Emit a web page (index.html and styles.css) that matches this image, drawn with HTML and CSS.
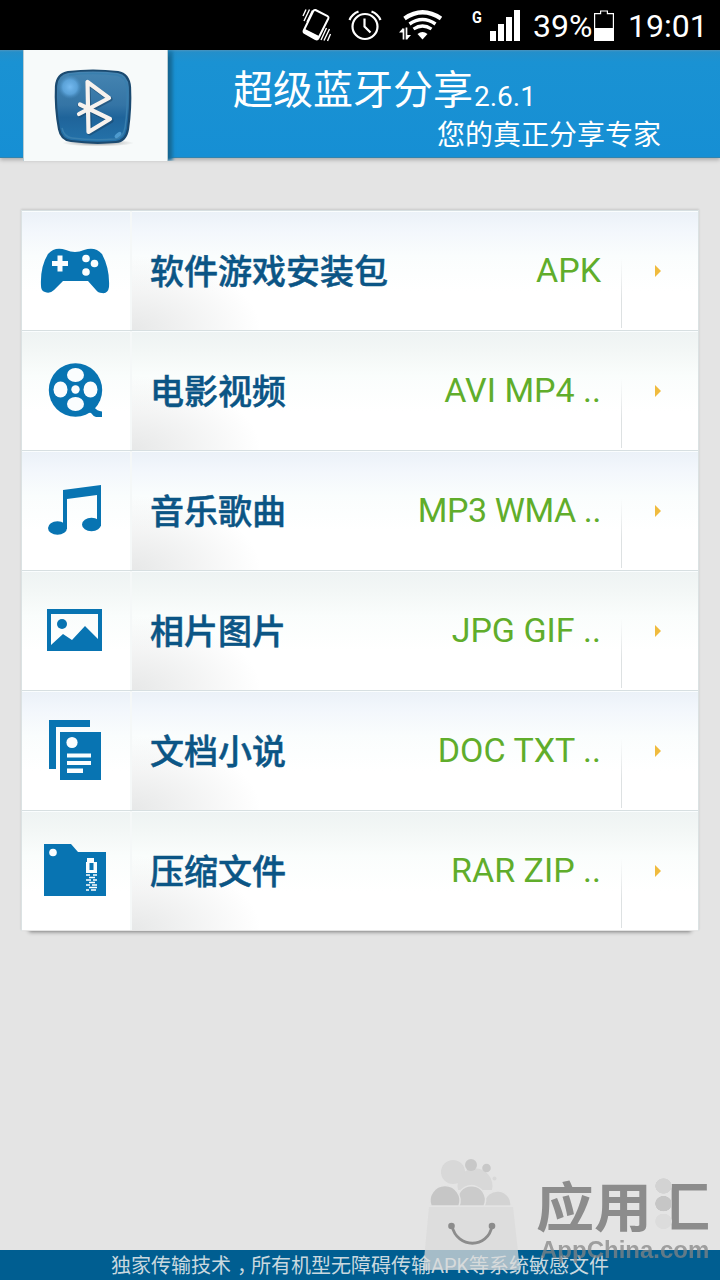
FILE: index.html
```html
<!DOCTYPE html>
<html lang="zh-CN">
<head>
    <meta charset="UTF-8">
    <meta name="viewport" content="width=device-width, initial-scale=1.0">
    <title>超级蓝牙分享</title>
    <link rel="stylesheet" href="styles.css">
</head>
<body>
    <div id="container">
        <div class="status">
            <svg class="vibrate" width="32" height="36" viewBox="0 0 32 36" fill="none" stroke="#fff">
                <path d="M14.500 3 L26.500 9 Q28 10 27.300 11.500 L17.500 31 Q16.500 33 14.500 32 L3.500 26 Q2 25 3 23 L12 4.500 Q13 2.500 14.500 3 Z" stroke-width="2" />
                <path d="M2 25 L4 22 L18 29 L16.500 33 Z" fill="#fff" stroke="none" />
                <path d="M2 9 L5 2.500 M3 14 L8.500 2.500 M6 15 L11.500 3.500 M20 33 L25.500 21 M23 33.500 L28.500 22 M26.500 34 L29.500 27" stroke-width="1.400" />
            </svg>
            <svg class="alarm" width="34" height="34" viewBox="0 0 34 34" fill="none" stroke="#fff" stroke-width="2.200">
                <circle cx="17" cy="18.500" r="12.500" />
                <path d="M16.500 10.500 V18.500 L22.500 24.500" />
                <path d="M1.500 12 Q4 6 10.500 3.500 M32.500 12 Q30 6 23.500 3.500" />
            </svg>
            <svg class="wifi" width="44" height="32" viewBox="0 0 44 32" fill="none" stroke="#fff">
                <path d="M5.500 9.500 Q23.500 -3 42 9.500" stroke-width="4.200" />
                <path d="M10.500 15 Q23.500 6 36.500 15" stroke-width="3.400" />
                <path d="M14.500 20 Q23.500 14 32.500 20" stroke-width="3.200" />
                <path d="M18.500 25 Q23.500 21 28.500 25 L23.500 30.500 Z" fill="#fff" stroke="none" />
                <path d="M4.500 30.500 V19.500 M7.500 18.500 V30.500" stroke-width="1.700" />
                <path d="M0 23.500 L4 19 V23.500 Z M8 26 H12 L8 30.500 Z" fill="#fff" stroke="none" />
            </svg>
            <span class="net">G</span>
            <svg class="signal" width="30" height="31" viewBox="0 0 30 31" fill="#fff">
                <path d="M0 21 h6 v10 h-6 z M8 14 h6 v17 h-6 z M16 7 h6 v24 h-6 z M24 0 h6 v31 h-6 z" />
            </svg>
            <span class="percent">39%</span>
            <svg class="battery" width="20" height="31" viewBox="0 0 20 31">
                <path d="M.6 3.600 H6.600 V1 H13.400 V3.600 H19.400 V30 H.6 Z" fill="none" stroke="#fff" stroke-width="1.200" />
                <rect y="18" width="20" height="13" fill="#fff" />
            </svg>
            <span class="clock">19:01</span>
        </div>

        <div class="header">
            <div class="logo">
                <svg width="84" height="80" viewBox="0 0 84 80">
                    <defs>
                        <linearGradient id="glass" x1="0" y1="0" x2="0" y2="1">
                            <stop offset="0" stop-color="#4685b2" />
                            <stop offset=".48" stop-color="#3474a5" />
                            <stop offset=".65" stop-color="#1f649a" />
                            <stop offset="1" stop-color="#2472aa" />
                        </linearGradient>
                        <radialGradient id="shine">
                            <stop offset="0" stop-color="#75baf0" />
                            <stop offset=".6" stop-color="#62abe3" stop-opacity=".8" />
                            <stop offset="1" stop-color="#4a8fc4" stop-opacity="0" />
                        </radialGradient>
                        <radialGradient id="under">
                            <stop offset="0" stop-color="#777" stop-opacity=".75" />
                            <stop offset="1" stop-color="#777" stop-opacity="0" />
                        </radialGradient>
                    </defs>
                    <ellipse cx="46" cy="76" rx="36" ry="3.500" fill="url(#under)" />
                    <path d="M16 5 Q41 2 66 5 Q77 7 78 20 Q79 41 76 62 Q74 74 64 75 Q41 77 19 74 Q9 73 7 62 Q3 41 4 19 Q5 7 16 5 Z" fill="url(#glass)" stroke="#1b4a70" stroke-width="2.200" />
                    <path d="M17 8 Q41 5 65 8 Q74 10 75 20 Q76 41 73 61 Q71 71 63 72 Q41 74 20 71 Q12 70 10 61" fill="none" stroke="#397fae" stroke-width="1.500" />
                    <ellipse cx="18" cy="20" rx="12" ry="12" fill="url(#shine)" />
                    <ellipse cx="66" cy="68" rx="4" ry="2" fill="#61aee0" opacity=".7" transform="rotate(-40 66 68)" />
                    <path d="M28 48 L58 32 L36 16 L37.500 66 L59 53.500 L28 38" fill="none" stroke="#173f61" stroke-width="5" stroke-linejoin="round" stroke-linecap="round" opacity=".5" />
                    <path d="M27 47 L57 31 L35.500 15 L36.500 65 L58 52 L28 37.500" fill="none" stroke="#f7f2ee" stroke-width="4.200" stroke-linejoin="round" stroke-linecap="round" />
                </svg>
            </div>
            <div class="title">
                <h1>超级蓝牙分享<small>2.6.1</small></h1>
                <p>您的真正分享专家</p>
            </div>
        </div>

        <div class="list">
            <div class="item">
                <div class="icon">
                    <svg width="70" height="48" viewBox="0 0 70 48">
                        <path d="M8 7 Q15 -1 26 3 Q35 7 44 3 Q55 -1 62 7 Q70 22 69 40 Q68 47 62 46 Q58 46 56 43 L48 34 H23 L14 43 Q10 47 5 45 Q1 44 1 39 Q0 20 8 7 Z" />
                        <path class="hole" d="M17.500 8.500 h5 v5.500 h5.500 v5 h-5.500 v5.500 h-5 v-5.500 h-5.500 v-5 h5.500 z" />
                        <circle class="hole" cx="46" cy="11.500" r="3.800" />
                        <circle class="hole" cx="54.500" cy="16.500" r="3.800" />
                        <circle class="hole" cx="46" cy="25" r="3.800" />
                    </svg>
                </div>
                <div class="name">软件游戏安装包</div>
                <div class="type">APK</div>
                <div class="more"></div>
            </div>
            <div class="item">
                <div class="icon">
                    <svg width="56" height="56" viewBox="0 0 56 56">
                        <circle cx="28.500" cy="27" r="26.700" />
                        <path d="M40 49 L47 44 Q50 48 55 48.500 V54 H49 Q46 53 44 50 Z" />
                        <ellipse class="hole" cx="28.500" cy="12" rx="8.500" ry="7" />
                        <ellipse class="hole" cx="28.500" cy="41" rx="8.500" ry="7" />
                        <ellipse class="hole" cx="13.500" cy="26.500" rx="7" ry="8" />
                        <ellipse class="hole" cx="43.500" cy="26.500" rx="7" ry="8" />
                        <circle class="hole" cx="28.500" cy="26.500" r="4.200" />
                    </svg>
                </div>
                <div class="name">电影视频</div>
                <div class="type">AVI MP4 ..</div>
                <div class="more"></div>
            </div>
            <div class="item">
                <div class="icon">
                    <svg width="54" height="52" viewBox="0 0 54 52">
                        <path d="M15 5 L53 0 V41 H49 V10 L19 14 V44 H15 Z" />
                        <ellipse cx="9.500" cy="43" rx="9.500" ry="6.800" />
                        <ellipse cx="43.500" cy="39.500" rx="9.500" ry="6.800" />
                    </svg>
                </div>
                <div class="name">音乐歌曲</div>
                <div class="type narrow">MP3 WMA ..</div>
                <div class="more"></div>
            </div>
            <div class="item">
                <div class="icon">
                    <svg width="56" height="44" viewBox="0 0 56 44">
                        <path d="M0 0 H55 V42 H0 Z M4 5 V36 L16 25 L25 31 L38 17 L51 30 V5 Z" fill-rule="evenodd" />
                        <circle cx="15" cy="15" r="5" />
                    </svg>
                </div>
                <div class="name">相片图片</div>
                <div class="type">JPG GIF ..</div>
                <div class="more"></div>
            </div>
            <div class="item">
                <div class="icon">
                    <svg width="54" height="62" viewBox="0 0 54 62">
                        <path d="M1 0 H42 V7 H8 V49 H1 Z" />
                        <rect x="12" y="12" width="41" height="48" />
                        <circle class="hole" cx="24" cy="22.500" r="5.600" />
                        <path class="hole" d="M19 33.500 h24 v4 h-24 z M19 41 h24 v4 h-24 z M19 48.500 h16 v4.500 h-16 z" />
                    </svg>
                </div>
                <div class="name">文档小说</div>
                <div class="type">DOC TXT ..</div>
                <div class="more"></div>
            </div>
            <div class="item">
                <div class="icon">
                    <svg width="62" height="54" viewBox="0 0 62 54">
                        <path d="M0 0 H27 L34 8 H62 V52 H0 Z" />
                        <circle class="hole" cx="9" cy="8.500" r="3.800" />
                        <path class="hole" d="M43 14 h7 v4 h3 v11 h-11 v-11 h1 z" />
                        <rect x="45.500" y="19" width="4" height="7" />
                        <path d="M42 31 h4 M49 31 h4 M45 33.500 h6 M42 36 h5 M49 36 h4 M45 38.500 h6 M42 41 h4 M48 41 h5 M45 43.500 h8 M42 46 h3 M47 46 h5" fill="none" stroke="#fff" stroke-width="1.600" />
                    </svg>
                </div>
                <div class="name">压缩文件</div>
                <div class="type">RAR ZIP ..</div>
                <div class="more"></div>
            </div>
        </div>

        <div class="footer">独家传输技术<span class="comma">，</span>所有机型无障碍传输APK等系统敏感文件</div>

        <div class="mark">
            <svg width="100" height="120" viewBox="0 0 100 120">
                <g fill="#d7d7d7">
                    <circle cx="31" cy="22" r="12" />
                    <path d="M36 40 a17.500 17.500 0 1 1 34 0 z" />
                    <circle cx="72.500" cy="28.500" r="2" />
                </g>
                <circle cx="49" cy="15" r="6" fill="#c6c6c6" />
                <circle cx="64.500" cy="18" r="4.300" fill="#c6c6c6" />
                <g stroke="#e4e4e4" stroke-width="1.500">
                    <path d="M62 56 v-3 a13 13 0 0 1 27 3 z" fill="#d2d2d2" />
                    <path d="M36 56 v-10 a14 14 0 1 1 26 10 z" fill="#c9c9c9" />
                    <path d="M9 56 a15 15 0 1 1 28 0 z" fill="#c4c4c4" />
                </g>
                <path d="M7 57 H91 L98 120 H1 Z" fill="#dadada" opacity=".82" />
                <path d="M30 76 C35 99 66 99 70 76" fill="none" stroke="#858585" stroke-width="2.800" />
                <circle cx="29.500" cy="76" r="3.300" fill="#858585" />
                <circle cx="70" cy="76" r="3.300" fill="#858585" />
            </svg>
            <div class="brand">
                <div class="brand-name">应用<span class="hui">汇</span></div>
                <div class="brand-site">AppChina.com</div>
            </div>
        </div>
    </div>
</body>
</html>
```
FILE: styles.css
```css
* {
    margin: 0;
    padding: 0;
    box-sizing: border-box;
}
body {
    font-family: Roboto, "Noto Sans CJK SC", sans-serif;
    background-color: #e4e4e4;
}
svg {
    display: block;
    flex-shrink: 0;
}
#container {
    width: 720px;
    height: 1280px;
    position: relative;
    display: flex;
    flex-direction: column;
    overflow: hidden;
}
.status {
    height: 50px;
    padding-left: 301px;
    display: flex;
    align-items: center;
    background-color: #000;
    color: #fff;
    font-size: 32px;
    line-height: 50px;
    white-space: nowrap;
}
.alarm {
    margin-left: 15px;
}
.wifi {
    margin-left: 17px;
}
.net {
    width: 18px;
    margin-left: 29px;
    font-size: 17px;
    font-weight: bold;
    line-height: 17px;
    transform: translateY(-8px) scaleX(.85);
    transform-origin: left;
}
.percent {
    width: 61px;
    margin: 1px 0 0 13px;
}
.signal, .battery {
    margin-top: 1px;
}
.clock {
    margin: 1px 0 0 14px;
}
.header {
    height: 108px;
    display: flex;
    background: linear-gradient(#4a93bd 0, #248fca 2px, #1a92d3 12px, #168fd4 100%);
    border-bottom: 1px solid #3284ae;
    box-shadow: 0 2px 4px rgba(0, 0, 0, .25);
    color: #fff;
}
.logo {
    width: 145px;
    height: 111px;
    margin-left: 23px;
    padding: 17px 0 0 28px;
    background-color: #f7fafa;
    border: solid #b8ccd3;
    border-width: 0 1px;
    box-shadow: 6px 2px 3px -4px #14648f, 6px 0 3px -1px #1975a7;
    clip-path: inset(0 -10px 0 -2px);
    flex-shrink: 0;
}
.title {
    width: 428px;
    margin-left: 65px;
}
.title h1 {
    height: 65px;
    font-size: 40px;
    font-weight: normal;
    line-height: 82px;
}
.title small {
    margin-left: 1px;
    font-size: 28px;
    position: relative;
    top: 2px;
}
.title p {
    font-size: 28px;
    line-height: 41px;
    text-align: right;
}
.list {
    width: 678px;
    height: 721px;
    margin: 52px 0 0 21px;
    border: solid #dbe2e3;
    border-width: 0 1px;
    box-shadow: 0 -1px 2px rgba(0, 0, 0, .12), 0 9px 4px -8px rgba(0, 0, 0, .45);
}
.item {
    height: 120px;
    display: flex;
    align-items: center;
    background: linear-gradient(#ebf1f8 0, #f3f7fc 20px, #fafdfd 45px, #fff 80px);
    border-top: 1px solid #d7dfe1;
    box-shadow: inset 0 1px #fafdfe;
}
.item:nth-child(even) {
    background: linear-gradient(#eef3f3 0, #f3f7f6 20px, #fafdfc 45px, #fff 80px);
}
.icon {
    width: 110px;
    height: 119px;
    padding-right: 2px;
    display: flex;
    align-items: center;
    justify-content: center;
    border-right: 2px solid #f5f8f8;
}
.icon svg {
    fill: #0874b2;
}
.icon .hole {
    fill: #fafdfe;
}
.name {
    height: 119px;
    flex: 1;
    padding-left: 18px;
    background: radial-gradient(ellipse at 0 100%, rgba(145, 150, 150, .22), rgba(170, 175, 175, .1) 45%, transparent 70%) no-repeat left bottom / 130px 75px;
    color: #0b5585;
    font-size: 34px;
    font-weight: 500;
    line-height: 122px;
    white-space: nowrap;
    -webkit-text-stroke: .5px #0b5585;
}
.type {
    padding-right: 20px;
    color: #60ad2b;
    font-size: 34px;
    line-height: 121px;
}
.narrow {
    letter-spacing: -.4px;
}
.more {
    width: 77px;
    height: 119px;
    padding-left: 34px;
    display: flex;
    align-items: center;
    background: linear-gradient(transparent 40%, #dde1e2 75%) no-repeat left top / 1px 117px;
}
.more::after {
    content: "";
    border: solid transparent;
    border-width: 6px 0 6px 6px;
    border-left-color: #f0bb3e;
}
.footer {
    height: 30px;
    margin-top: auto;
    background-color: #005e91;
    color: #c9d8df;
    font-size: 20px;
    line-height: 33px;
    text-align: center;
}
.comma {
    display: inline-block;
    width: 20px;
    text-indent: 6px;
}
/* 水印浮在页脚上 */
.mark {
    position: absolute;
    left: 422px;
    top: 1150px;
    display: flex;
    opacity: .92;
}
.brand {
    margin: 16px 0 0 14px;
    color: #858585;
}
.brand-name {
    position: relative;
    width: 176px;
    height: 70px;
    font-family: "Noto Sans CJK SC", sans-serif;
    font-size: 58px;
    font-weight: bold;
    line-height: 82px;
    white-space: nowrap;
    transform: scaleY(.93);
    transform-origin: top;
}
.hui {
    background: linear-gradient(90deg, transparent 33%, #858585 33%);
    -webkit-background-clip: text;
    background-clip: text;
    color: transparent;
}
.brand-name::after {
    content: "";
    position: absolute;
    left: 119px;
    top: 12px;
    width: 17px;
    height: 57px;
    background:
        radial-gradient(circle, #d2d2d2 8px, transparent 8.500px) 0 0 / 17px 19px no-repeat,
        radial-gradient(circle, #c4c4c4 8px, transparent 8.500px) 0 19px / 17px 19px no-repeat,
        radial-gradient(circle, #dcdcdc 8px, transparent 8.500px) 0 38px / 17px 19px no-repeat;
}
.brand-site {
    margin-left: 4px;
    font-family: "Liberation Sans", sans-serif;
    font-size: 24px;
    font-weight: bold;
    line-height: 27px;
    opacity: .8;
}
```
